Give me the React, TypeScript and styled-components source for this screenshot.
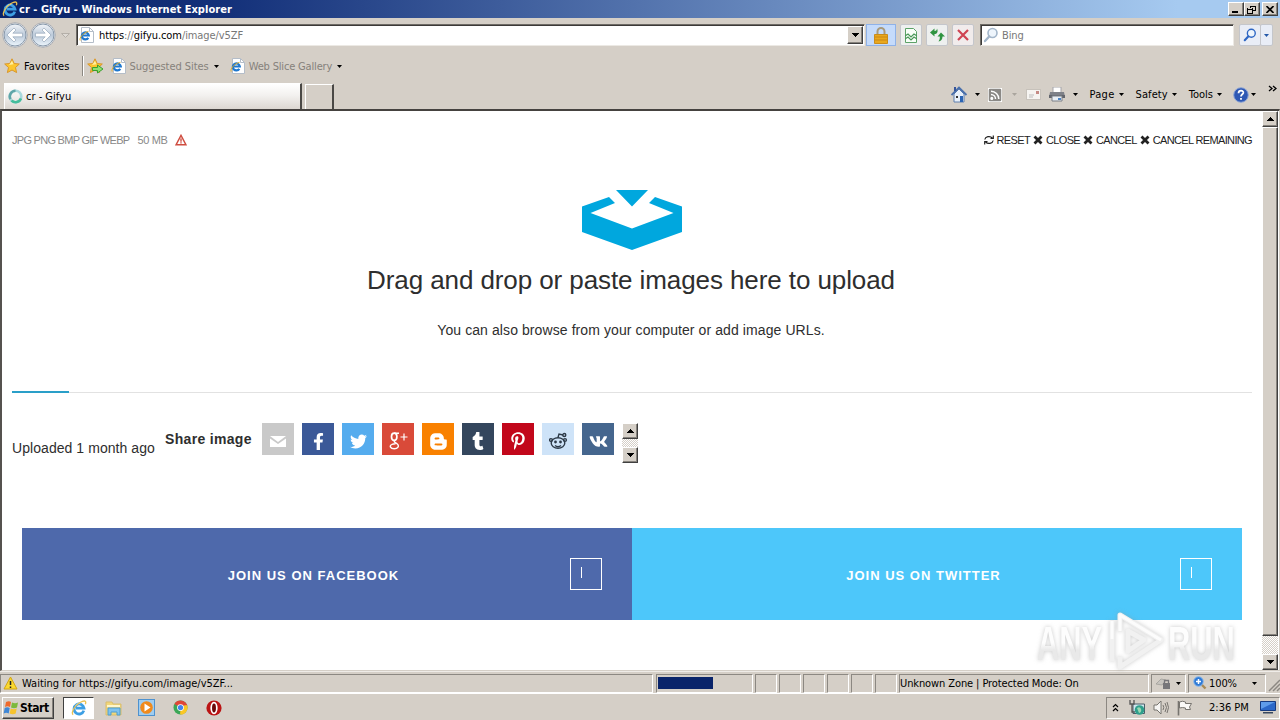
import React from 'react';
import styled, { createGlobalStyle, css } from 'styled-components';
import { FaFacebookF, FaTwitter, FaBloggerB, FaTumblr, FaPinterestP, FaVk } from 'react-icons/fa';

const Global = createGlobalStyle`
  * { box-sizing: border-box; }
  body { margin: 0; overflow: hidden; background: #d5cec6; }
  svg { display: block; flex: none; }
`;

const face = '#d5cfc7';

const raised = css`
  border: 1px solid;
  border-color: #fff #404040 #404040 #fff;
  box-shadow: inset -1px -1px 0 #86827c;
  background: ${face};
`;

const Window = styled.div`
  width: 1280px;
  height: 720px;
  display: flex;
  flex-direction: column;
  background: ${face};
  color: #000;
  font: 11px/14px 'DejaVu Sans Condensed', 'DejaVu Sans', sans-serif;
  font-stretch: condensed;
  white-space: nowrap;
`;

const Text = styled.span<{ $sp?: number; $c?: string; $ml?: number; $mt?: number }>`
  letter-spacing: ${p => p.$sp ?? -0.1}px;
  color: ${p => p.$c ?? '#000'};
  margin-left: ${p => p.$ml ?? 0}px;
  margin-top: ${p => p.$mt ?? 0}px;
  flex: none;
`;

const Space = styled.div<{ $w?: number }>`
  ${p => (p.$w === undefined ? 'flex: 1;' : `flex: none; width: ${p.$w}px;`)}
`;

const TitleBar = styled.header`
  height: 18px;
  flex: none;
  display: flex;
  align-items: center;
  padding: 0 2px 0 2px;
  background: linear-gradient(90deg, #0a246a 0%, #14317a 18%, #a6caf0 92%);
`;

const Title = styled.h1`
  margin: 1px 0 0 1px;
  flex: 1;
  color: #fff;
  font-size: 11px;
  font-weight: bold;
  letter-spacing: 0.03px;
`;

const CaptionButton = styled.button<{ $gap?: number }>`
  ${raised}
  width: 16px;
  height: 14px;
  padding: 0;
  margin-left: ${p => p.$gap ?? 0}px;
  display: flex;
  align-items: center;
  justify-content: center;
`;

const NavBar = styled.div`
  height: 34px;
  flex: none;
  display: flex;
  align-items: center;
  padding-left: 2px;
`;

const Field = styled.div<{ $w: number }>`
  width: ${p => p.$w}px;
  height: 22px;
  flex: none;
  display: flex;
  align-items: center;
  background: #fff;
  border: 1px solid;
  border-color: #6e6b66 #ece9e4 #ece9e4 #6e6b66;
  box-shadow: inset 1px 1px 0 #3c3a38;
  padding-left: 2px;
`;

const DropButton = styled.div`
  ${raised}
  width: 16px;
  height: 18px;
  display: flex;
  align-items: center;
  justify-content: center;
  margin-right: 1px;
`;

const ToolButton = styled.div<{ $w?: number; $ml: number; $active?: boolean; $bg?: string }>`
  width: ${p => p.$w ?? 22}px;
  height: 22px;
  flex: none;
  margin-left: ${p => p.$ml}px;
  display: flex;
  align-items: center;
  justify-content: center;
  border: 1px solid ${p => (p.$active ? '#8fb2e8' : '#c4c6cb')};
  border-radius: ${p => (p.$active ? 0 : 2)}px;
  background: ${p => (p.$active ? '#c5dbfb' : p.$bg ?? '#eef0ef')};
`;

const FavoritesBar = styled.div`
  height: 28px;
  flex: none;
  display: flex;
  align-items: center;
  padding-left: 4px;
`;

const Divider = styled.div`
  width: 2px;
  height: 20px;
  border-left: 1px solid #8b8781;
  border-right: 1px solid #fff;
`;

const TabBar = styled.div`
  height: 29px;
  flex: none;
  display: flex;
  align-items: flex-end;
  padding-left: 4px;
`;

const Tab = styled.div`
  width: 298px;
  height: 26px;
  display: flex;
  align-items: center;
  padding-left: 3px;
  background: linear-gradient(#fff, #f3f1ef 45%, #dcd7d1);
  border-top: 1px solid #fff;
  border-left: 1px solid #fff;
  border-right: 2px solid #4a4845;
`;

const NewTab = styled.div`
  width: 29px;
  height: 25px;
  margin-left: 3px;
  border: 1px solid #fff;
  border-right: 2px solid #4a4845;
  border-bottom: 0;
`;

const CommandBar = styled.div`
  flex: 1;
  height: 29px;
  display: flex;
  align-items: center;
  justify-content: flex-end;
  padding-right: 3px;
`;

const Viewport = styled.div`
  height: 562px;
  flex: none;
  display: flex;
  background: #fff;
  border-top: 2px solid #45423f;
  border-left: 2px solid #55524f;
  border-right: 1px solid ${face};
  border-bottom: 1px solid ${face};
`;

const Page = styled.main`
  width: 1260px;
  flex: none;
  padding: 0 10px;
  color: #2e2e2e;
  font-family: 'Liberation Sans', Arial, sans-serif;
`;

const UploadHeader = styled.div`
  display: flex;
  align-items: center;
  height: 16px;
  margin-top: 21px;
  font-size: 11px;
`;

const Formats = styled.span<{ $sp: number }>`
  color: #888;
  letter-spacing: ${p => p.$sp}px;
  margin-right: 8px;
`;

const Action = styled.a`
  display: flex;
  align-items: center;
  gap: 3px;
  margin-left: 3px;
  letter-spacing: -0.65px;
  color: #222;
`;

const Drop = styled.section`
  display: flex;
  flex-direction: column;
  align-items: center;
  padding-top: 42px;
  height: 243px;
`;

const Heading = styled.h2`
  margin: 14px 2px 0 0;
  font-size: 26px;
  line-height: 32px;
  font-weight: normal;
  letter-spacing: -0.09px;
`;

const Hint = styled.p`
  margin: 26px 2px 0 0;
  font-size: 14px;
  line-height: 16px;
  letter-spacing: 0.09px;
`;

const Rule = styled.div`
  height: 2px;
  display: flex;
  align-items: flex-end;
  background: linear-gradient(#fff 50%, #e2e2e2 50%);
`;

const RuleActive = styled.div`
  width: 57px;
  height: 2px;
  background: #2a9fc8;
`;

const ShareRow = styled.div`
  display: flex;
  align-items: flex-start;
  height: 40px;
  margin-top: 30px;
  font-size: 14px;
  line-height: 16px;
`;

const Uploaded = styled.span`
  width: 153px;
  margin-top: 17px;
  letter-spacing: 0.06px;
`;

const ShareLabel = styled.b`
  width: 97px;
  margin-top: 8px;
  letter-spacing: 0.32px;
`;

const Social = styled.a<{ $bg: string }>`
  width: 32px;
  height: 32px;
  margin-right: 8px;
  padding-top: 4px;
  display: flex;
  align-items: center;
  justify-content: center;
  background: ${p => p.$bg};
  color: #fff;
`;

const track = css`
  background: repeating-conic-gradient(#fff 0 25%, ${face} 0 50%) 0 0 / 2px 2px;
`;

const MiniScroll = styled.div`
  width: 16px;
  height: 40px;
  display: flex;
  flex-direction: column;
  justify-content: space-between;
  ${track}
`;

const ScrollButton = styled.div`
  ${raised}
  width: 16px;
  height: 16px;
  flex: none;
  display: flex;
  align-items: center;
  justify-content: center;
`;

const ScrollBar = styled.div`
  width: 16px;
  display: flex;
  flex-direction: column;
  ${track}
`;

const Thumb = styled.div`
  ${raised}
  height: 509px;
`;

const JoinRow = styled.div`
  display: flex;
  height: 92px;
  margin: 65px 10px 0;
`;

const Join = styled.a<{ $bg: string }>`
  flex: 1;
  display: flex;
  align-items: center;
  padding: 0 30px 0 35px;
  background: ${p => p.$bg};
  color: #fff;
  font-size: 13px;
  font-weight: bold;
`;

const JoinText = styled.span`
  flex: 1;
  text-align: center;
  letter-spacing: 1px;
  margin-top: 3px;
`;

const JoinBox = styled.span`
  width: 32px;
  height: 32px;
  border: 1px solid #fff;
  padding: 8px 0 0 10px;
`;

const Caret = styled.i`
  display: block;
  width: 1px;
  height: 11px;
  background: #fff;
`;

const StatusBar = styled.div`
  height: 22px;
  flex: none;
  display: flex;
  align-items: center;
  border-top: 1px solid #efece8;
  padding-top: 1px;
`;

const Pane = styled.div<{ $w: number; $mr?: number; $pl?: number }>`
  width: ${p => p.$w}px;
  height: 19px;
  flex: none;
  display: flex;
  align-items: center;
  margin-right: ${p => p.$mr ?? 2}px;
  padding-left: ${p => p.$pl ?? 0}px;
  border: 1px solid;
  border-color: #8c8882 #fff #fff #8c8882;
`;

const Progress = styled.div`
  width: 55px;
  height: 12px;
  background: #0a246a;
`;

const TaskBar = styled.footer`
  height: 27px;
  flex: none;
  display: flex;
  align-items: center;
  border-top: 1px solid #fff;
  padding: 1px 2px 0;
`;

const StartButton = styled.div`
  ${raised}
  width: 52px;
  height: 22px;
  display: flex;
  align-items: center;
  font-size: 12px;
  font-weight: bold;
  letter-spacing: -0.4px;
`;

const ActiveTask = styled.div`
  width: 31px;
  height: 22px;
  margin-left: 9px;
  display: flex;
  align-items: center;
  justify-content: center;
  background: #fff;
  border: 1px solid;
  border-color: #404040 #fff #fff #404040;
`;

const Tray = styled.div`
  width: 174px;
  height: 22px;
  margin-right: -2px;
  display: flex;
  align-items: center;
  border: 1px solid;
  border-color: #8c8882 #fff #fff #8c8882;
  padding-left: 5px;
`;

const Watermark = styled.div`
  position: absolute;
  left: 1037px;
  top: 608px;
  width: 200px;
  height: 66px;
  display: flex;
  align-items: center;
  pointer-events: none;
`;

const MarkSlot = styled.div<{ $w: number }>`
  width: ${p => p.$w}px;
  flex: none;
  filter: drop-shadow(0 0 2px rgba(150, 150, 150, 0.5));
`;

const MarkText = styled.span`
  display: inline-block;
  font: 700 49px/60px 'Liberation Sans', Arial, sans-serif;
  color: transparent;
  background: linear-gradient(#fdfdfd 50%, #e9e9e9 62%);
  -webkit-background-clip: text;
  background-clip: text;
  transform: scaleX(0.63);
  transform-origin: 0 50%;
  margin-top: 4px;
`;

const Mark = styled.svg`
  filter: drop-shadow(0 0 2px rgba(150, 150, 150, 0.5));
`;

const Arrow = ({ up, color = '#000', w = 7 }: { up?: boolean; color?: string; w?: number }) => (
  <svg width={w} height={4} viewBox="0 0 7 4" shapeRendering="crispEdges">
    <path d={up ? 'M3 0h1l3 4H0z' : 'M0 0h7L4 4H3z'} fill={color} />
  </svg>
);

const SmallArrow = ({ color = '#000' }: { color?: string }) => (
  <svg width="5" height="3" viewBox="0 0 5 3"><path d="M0 0h5L2.5 3z" fill={color} /></svg>
);

const IELogo = ({ s = 16 }: { s?: number }) => (
  <svg width={s} height={s} viewBox="0 0 16 16" fill="none">
    <path d="M12.8 10.6A5 5 0 1 1 13 8.2H5" stroke="#3d9fe4" strokeWidth="2.8" />
    <path d="M4.4 6.2a4.4 4.4 0 0 1 5-2.6" stroke="#a5dcfa" strokeWidth="1" />
    <path d="M2.2 14.6C-.6 13 4 5.2 9 2.5s6.600-1.500 5.300 1.800" stroke="#e9c052" strokeWidth="1.300" />
  </svg>
);

const IEPage = () => (
  <svg width="15" height="16" viewBox="0 0 15 16" fill="none">
    <path d="M2.500.5h8l4 4v11h-12z" fill="#fff" stroke="#b4bdc8" />
    <path d="M10.500.5v4h4" stroke="#b4bdc8" />
    <path d="M9.300 10.800A3.500 3.500 0 1 1 9.800 8.500H3.500" stroke="#1f78cf" strokeWidth="2.200" />
    <path d="M1.200 13.500C0 11 4 6 9.500 4.300" stroke="#e0ad2a" />
  </svg>
);

const RoundNav = ({ flip }: { flip?: boolean }) => (
  <svg width="26" height="26" viewBox="0 0 26 26" style={flip ? { transform: 'scaleX(-1)' } : undefined}>
    <defs>
      <linearGradient id="nav" x1="0" y1="0" x2="0" y2="1">
        <stop offset="0" stopColor="#f2f5f9" /><stop offset=".5" stopColor="#bccada" /><stop offset="1" stopColor="#ecf5fc" />
      </linearGradient>
    </defs>
    <circle cx="13" cy="13" r="12.300" fill="#f4f5f7" stroke="#a9acb2" />
    <circle cx="13" cy="13" r="11" fill="url(#nav)" stroke="#8697a9" />
    <path d="M5 13l7-7 2 2-3.200 3.200H20.500v3.600h-9.700L14 18l-2 2z" fill="#fff" stroke="#8b9db1" strokeWidth=".6" />
  </svg>
);

const Star = ({ add }: { add?: boolean }) => (
  <svg width="17" height="16" viewBox="0 0 17 16">
    <path d="M8 .8l2.200 4.700 5.100.5-3.800 3.500 1.100 5.100L8 12l-4.600 2.600 1.100-5.100L.7 6l5.100-.5z" fill="#fcc62e" stroke="#d9962a" />
    <path d="M8 2.800l1.500 3.500L5 7z" fill="#fff0a0" />
    {add && <path d="M5.500 9.500h5V7l5.500 4-5.500 4v-2.500h-5z" fill="#8fe070" stroke="#2d9a28" strokeWidth=".9" />}
  </svg>
);

const Cross = () => (
  <svg width="10" height="10" viewBox="0 0 10 10">
    <path d="M1.500 1.500l7 7M8.500 1.500l-7 7" stroke="#222" strokeWidth="2.800" />
  </svg>
);

const Lens = ({ c, s = 16 }: { c: string; s?: number }) => (
  <svg width={s} height={s} viewBox="0 0 16 16" fill="none">
    <circle cx="9.500" cy="6" r="4.500" fill="#eef5fc" stroke={c} strokeWidth="1.600" />
    <path d="M6.200 9.500L2 14" stroke={c} strokeWidth="2.400" strokeLinecap="round" />
  </svg>
);

export default function App() {
  return (
    <Window>
      <Global />
      <TitleBar>
        <IELogo s={16} />
        <Title>cr - Gifyu - Windows Internet Explorer</Title>
        <CaptionButton><svg width="8" height="8"><path d="M0 6h6v2H0z" /></svg></CaptionButton>
        <CaptionButton>
          <svg width="10" height="9" fill="none" stroke="#000" shapeRendering="crispEdges">
            <path d="M3 1h6M3.500 1v2M8.500 1v5M6 5.500h3M0 4h6M.5 3v6M5.500 3v6M0 8.500h6" />
          </svg>
        </CaptionButton>
        <CaptionButton $gap={2}>
          <svg width="8" height="7" stroke="#000" strokeWidth="1.600"><path d="M.5 0l7 7M7.500 0l-7 7" /></svg>
        </CaptionButton>
      </TitleBar>

      <NavBar>
        <RoundNav />
        <Space $w={2} />
        <RoundNav flip />
        <Space $w={5} />
        <svg width="9" height="5"><path d="M.5.5h8l-4 4z" fill="#dedad5" stroke="#b4afa8" /></svg>
        <Space $w={6} />
        <Field $w={789}>
          <IEPage />
          <Text $ml={5} $mt={2} $c="#777" $sp={-0.08}>
            <Text $sp={-0.08}>https</Text>://<Text $sp={-0.08}>gifyu.com</Text>/image/v5ZF
          </Text>
          <Space />
          <DropButton><Arrow /></DropButton>
        </Field>
        <ToolButton $w={30} $ml={1} $active>
          <svg width="14" height="17" viewBox="0 0 14 17">
            <path d="M3.500 8V4.500a3.500 3.500 0 0 1 7 0V8" fill="none" stroke="#a89a7c" strokeWidth="2" />
            <path d="M.5 7.500h13v9H.5z" fill="#e9a81e" stroke="#c98c1c" />
            <path d="M1 10h12M1 13h12" stroke="#c98614" />
          </svg>
        </ToolButton>
        <ToolButton $ml={4}>
          <svg width="12" height="15" fill="none">
            <path d="M.5.500h8l3 3v11H.5z" fill="#f8fff8" stroke="#5ca268" />
            <path d="M0 8l3-2 3 3 3-3 3 2M0 11l3-2 3 3 3-3 3 2" stroke="#4b985a" strokeWidth="1.200" />
          </svg>
        </ToolButton>
        <ToolButton $ml={4}>
          <svg width="15" height="14" viewBox="0 0 15 14" fill="#2f9440">
            <path d="M0 4.500L4.500.5v2.500C6.500 3 7 1.500 7 .5 8.500 4 7 6 4.500 6v2.500z" />
            <path d="M7.500 8.500L11 4.500l4 4h-2.500c0 3-1.500 4.500-4 5C9.500 12 10 10.500 9.800 8.500z" />
          </svg>
        </ToolButton>
        <ToolButton $ml={4} $bg="#f1ecec">
          <svg width="12" height="12" stroke="#cf4453" strokeWidth="2.200"><path d="M1 1l10 10M11 1L1 11" /></svg>
        </ToolButton>
        <Space $w={6} />
        <Field $w={254}>
          <Lens c="#a3b6ca" />
          <Text $ml={3} $mt={2} $c="#777">Bing</Text>
        </Field>
        <ToolButton $ml={5} $bg="#e9edf6"><Lens c="#2d66c4" s={14} /></ToolButton>
        <ToolButton $ml={-1} $w={13} $bg="#e9edf6"><SmallArrow color="#2458a8" /></ToolButton>
      </NavBar>

      <FavoritesBar>
        <Star />
        <Text $ml={3} $mt={1} $sp={0.1}>Favorites</Text>
        <Space $w={12} />
        <Divider />
        <Space $w={3} />
        <Star add />
        <Space $w={7} />
        <IEPage />
        <Text $ml={4} $mt={2} $c="#85817b" $sp={-0.05}>Suggested Sites</Text>
        <Space $w={5} />
        <SmallArrow />
        <Space $w={11} />
        <IEPage />
        <Text $ml={4} $mt={2} $c="#85817b" $sp={-0.17}>Web Slice Gallery</Text>
        <Space $w={5} />
        <SmallArrow />
      </FavoritesBar>

      <TabBar>
        <Tab>
          <svg width="15" height="15" fill="none" strokeWidth="2.600">
            <circle cx="7.500" cy="7.500" r="5.800" stroke="#a9d8dc" />
            <path d="M7.500 1.700a5.800 5.800 0 0 0-5 8.500" stroke="#5fa5a8" />
            <path d="M3.500 11.500a5.800 5.800 0 0 0 9.500-2" stroke="#45bd9c" />
          </svg>
          <Text $ml={3} $sp={0}>cr - Gifyu</Text>
        </Tab>
        <NewTab />
        <CommandBar>
          <svg width="17" height="17" viewBox="0 0 17 17">
            <path d="M3 8v8h10V8L8 3z" fill="#e8f0fa" stroke="#5e7fae" />
            <path d="M.5 9L8 1.500 15.500 9" fill="none" stroke="#4a70ac" strokeWidth="1.800" />
            <path d="M9 10h3v6H9z" fill="#2b64b4" /><path d="M5 10h2v2H5z" fill="#333" /><path d="M3 1h2v4H3z" fill="#36559a" />
          </svg>
          <Space $w={7} /><SmallArrow /><Space $w={8} />
          <svg width="14" height="14" fill="none" stroke="#fff" strokeWidth="1.500">
            <rect width="14" height="14" rx="2" fill="#8b8986" /><circle cx="3.800" cy="10.400" r=".8" />
            <path d="M3 6.500a4.500 4.500 0 0 1 4.500 4.500M3 3.300a7.800 7.800 0 0 1 7.800 7.800" />
          </svg>
          <Space $w={10} /><SmallArrow color="#aaa59e" /><Space $w={9} />
          <svg width="15" height="11"><rect x=".5" y=".5" width="14" height="10" fill="#f6f4f1" stroke="#c7c2bb" /><path d="M10 2h3v3h-3z" fill="#c58a84" /><path d="M3 6h5M3 8h4" stroke="#bbb" /></svg>
          <Space $w={8} />
          <svg width="16" height="15" viewBox="0 0 16 15">
            <path d="M4 0h8v6H4z" fill="#fff" stroke="#a5a5aa" /><path d="M1 5h14l1 5H0z" fill="#7e8188" /><path d="M0 8h16v3H0z" fill="#63666d" /><path d="M3 9h10v5H3z" fill="#e8eef4" stroke="#7c8088" /><path d="M9 11h3v2H9z" fill="#4c84c4" />
          </svg>
          <Space $w={8} /><SmallArrow /><Space $w={11} />
          <Text $sp={0.3}>Page</Text><Space $w={4} /><SmallArrow />
          <Space $w={12} /><Text $sp={0.1}>Safety</Text><Space $w={4} /><SmallArrow />
          <Space $w={12} /><Text $sp={0}>Tools</Text><Space $w={4} /><SmallArrow />
          <Space $w={11} />
          <svg width="16" height="16"><circle cx="8" cy="8" r="7.300" fill="#2e58b4" stroke="#8fa6d6" /><path d="M5.500 6.200c.2-3.600 5.300-3 4.800-.3C10 7.300 8 7.300 8 9.500M8 11v1.800" fill="none" stroke="#fff" strokeWidth="1.800" /></svg>
          <Space $w={2} /><SmallArrow />
          <Space $w={12} />
          <svg width="9" height="20" fill="none" stroke="#000" strokeWidth="1.300"><path d="M1 1l3 2.500L1 6M5 1l3 2.500L5 6" /></svg>
        </CommandBar>
      </TabBar>

      <Viewport>
        <Page>
          <UploadHeader>
            <Formats $sp={-0.72}>JPG PNG BMP GIF WEBP</Formats>
            <Formats $sp={-0.35}>50 MB</Formats>
            <svg width="12" height="12" fill="none" stroke="#cf4d40" strokeWidth="1.400">
              <path d="M6 1.300L11 10.800H1zM6 4.500v3.200M6 8.300v1.300" />
            </svg>
            <Space />
            <Action>
              <svg width="10" height="10" viewBox="0 0 10 10" fill="none" stroke="#222" strokeWidth="1.200">
                <path d="M.8 4.500C1.300 1.500 6 .5 8.300 3M9.200 5.500C8.700 8.500 4 9.500 1.700 7M9.300.5v3H6.500M.7 9.500v-3h2.800" />
              </svg>
              RESET
            </Action>
            <Action><Cross />CLOSE</Action>
            <Action><Cross />CANCEL</Action>
            <Action><Cross />CANCEL REMAINING</Action>
          </UploadHeader>
          <Drop>
            <svg width="100" height="60" viewBox="0 0 100 60" fill="#00a7de">
              <path d="M34 0h32L50 16.500zM27 7l6 6L8.500 23 50 38.500 91.500 23 67 13l6-6 27 9.500v25.500L50 60 0 42V16.500z" />
            </svg>
            <Heading>Drag and drop or paste images here to upload</Heading>
            <Hint>You can also browse from your computer or add image URLs.</Hint>
          </Drop>
          <Rule><RuleActive /></Rule>
          <ShareRow>
            <Uploaded>Uploaded 1 month ago</Uploaded>
            <ShareLabel>Share image</ShareLabel>
            <Social $bg="#c9c9c9"><svg width="16" height="12"><path d="M0 1h16L8 7zM0 3.500L8 9l8-5.500V12H0z" fill="#fff" /></svg></Social>
            <Social $bg="#3b5998"><FaFacebookF size={17} /></Social>
            <Social $bg="#55acee"><FaTwitter size={17} /></Social>
            <Social $bg="#d94a39">
              <svg width="19" height="18" viewBox="0 0 19 18" fill="none" stroke="#fff">
                <ellipse cx="5.200" cy="4.800" rx="2.700" ry="3.600" strokeWidth="1.700" />
                <path d="M5 1.200h5M6 8.500c-2 1.500.5 2 2 3.200 2.800 2.300.8 5-2.800 5-4 0-5-2.800-2.500-4.200 1-.6 2.300-.8 3.800-.8" strokeWidth="1.400" />
                <path d="M15 1.500v7M11.500 5H18.500" strokeWidth="1.200" />
              </svg>
            </Social>
            <Social $bg="#f98100"><FaBloggerB size={19} /></Social>
            <Social $bg="#34465d"><FaTumblr size={18} /></Social>
            <Social $bg="#c2071b"><FaPinterestP size={18} /></Social>
            <Social $bg="#cee3f8">
              <svg width="19" height="18" viewBox="0 0 19 18" fill="none" stroke="#2d3a48" strokeWidth="1.400">
                <ellipse cx="9" cy="11" rx="6.800" ry="5.300" /><path d="M9 5.500l1-3.500 4 1M6 13.500c1.800 1.500 4.200 1.500 6 0" />
                <circle cx="15.300" cy="3" r="1.500" /><circle cx="2" cy="8" r="1.400" /><circle cx="16" cy="8" r="1.400" />
                <circle cx="6.500" cy="10" r=".7" /><circle cx="11.500" cy="10" r=".7" />
              </svg>
            </Social>
            <Social $bg="#45668e"><FaVk size={19} /></Social>
            <MiniScroll>
              <ScrollButton><Arrow up /></ScrollButton>
              <ScrollButton><Arrow /></ScrollButton>
            </MiniScroll>
          </ShareRow>
          <JoinRow>
            <Join $bg="#4e69ab"><JoinText>JOIN US ON FACEBOOK</JoinText><JoinBox><Caret /></JoinBox></Join>
            <Join $bg="#4dc7fa"><JoinText>JOIN US ON TWITTER</JoinText><JoinBox><Caret /></JoinBox></Join>
          </JoinRow>
        </Page>
        <ScrollBar>
          <ScrollButton><Arrow up /></ScrollButton>
          <Thumb />
          <Space />
          <ScrollButton><Arrow /></ScrollButton>
        </ScrollBar>
      </Viewport>

      <StatusBar>
        <Pane $w={653} $mr={3} $pl={2}>
          <svg width="15" height="14"><path d="M7.500 1L14 13H1z" fill="#fbd92e" stroke="#d2a414" /><path d="M7.500 5v4M7.500 10.500V12" stroke="#222" strokeWidth="1.500" /></svg>
          <Text $ml={4} $mt={1} $sp={0}>Waiting for https://gifyu.com/image/v5ZF...</Text>
        </Pane>
        <Pane $w={97} $pl={1}><Progress /></Pane>
        {[0, 1, 2, 3, 4, 5].map(i => <Pane key={i} $w={22} />)}
        <Pane $w={250}><Text $mt={1}>Unknown Zone | Protected Mode: On</Text></Pane>
        <Pane $w={35} $pl={4}>
          <svg width="16" height="14" viewBox="0 0 16 14"><path d="M0 8l5-5 5 1-4 5z" fill="#c7c4bf" stroke="#9b9995" strokeWidth=".7" /><path d="M7 7h7v6H7z" fill="#77767a" /><path d="M8.500 7V4.500h4V7" fill="none" stroke="#77767a" strokeWidth="1.300" /></svg>
          <Space $w={4} /><SmallArrow />
        </Pane>
        <Pane $w={78} $pl={4}>
          <svg width="14" height="14" viewBox="0 0 14 14" fill="none"><path d="M8.500 8.500l4 4" stroke="#a98b57" strokeWidth="2.400" /><circle cx="5.500" cy="5.500" r="4.800" fill="#2f7ad6" stroke="#8db9ea" /><path d="M5.500 3v5M3 5.500h5" stroke="#fff" strokeWidth="1.500" /></svg>
          <Text $ml={2} $mt={1}>100%</Text><Space $w={15} /><SmallArrow />
        </Pane>
        <svg width="13" height="18" stroke="#8c8882" strokeWidth="1.500"><path d="M1 17L12 6M5 17l7-7M9 17l3-3" /></svg>
      </StatusBar>

      <TaskBar>
        <StartButton>
          <svg width="17" height="16" viewBox="0 0 17 16"><path d="M3 2q3-1.500 5 0L7 7Q4.500 5.500 2 7z" fill="#ee6a2c" /><path d="M9 2.500q3 1.500 6 0L14 7.500q-3 1.500-6 0z" fill="#7cb93c" /><path d="M1.700 8q2.500-1.500 5 0l-1 5.500q-2.500-1.500-5 0z" fill="#3f87d6" /><path d="M7.700 8.500q3 1.500 6 0l-1 5q-3 1.500-6 0z" fill="#f6c32d" /></svg>
          Start
        </StartButton>
        <ActiveTask><IELogo s={16} /></ActiveTask>
        <Space $w={11} />
        <svg width="17" height="16" viewBox="0 0 17 16"><path d="M1 2h6l1 2h8v11H1z" fill="#f2d77a" stroke="#d9bd6c" /><path d="M3 8h12v7h-3v-3H6v3H3z" fill="#7fc2ee" stroke="#4f9dd0" /><path d="M2 5h13v2H2z" fill="#fff6cc" /></svg>
        <Space $w={16} />
        <svg width="17" height="17" viewBox="0 0 17 17"><rect x=".5" y=".5" width="16" height="16" fill="#9fcdf0" stroke="#4e92cf" /><circle cx="8.500" cy="8.500" r="6.300" fill="#f08a1c" /><path d="M6.500 4.500v8l6-4z" fill="#fff" /></svg>
        <Space $w={18} />
        <svg width="15" height="15" viewBox="0 0 16 16"><circle cx="8" cy="8" r="7.500" fill="#3ba757" /><path d="M8 8L1.500 4.200A7.500 7.500 0 0 1 14.500 4.300z" fill="#e04637" /><path d="M8 8l6.500-3.800A7.500 7.500 0 0 1 7.500 15.500z" fill="#fbc724" /><path d="M8 4.300h6.700L15 5.500H9z" fill="#e04637" /><circle cx="8" cy="8" r="3.600" fill="#fff" /><circle cx="8" cy="8" r="2.800" fill="#4384ee" /></svg>
        <Space $w={18} />
        <svg width="16" height="16" viewBox="0 0 16 16"><circle cx="8" cy="8" r="7.600" fill="#bb1414" /><ellipse cx="8" cy="8" rx="2.800" ry="5.300" fill="#6b0808" stroke="#fff" strokeWidth="1.700" /></svg>
        <Space />
        <Tray>
          <svg width="7" height="9" fill="none" stroke="#000" strokeWidth="1.200"><path d="M1 4l2.500-2.500L6 4M1 8l2.500-2.500L6 8" /></svg>
          <Space $w={10} />
          <svg width="16" height="16" viewBox="0 0 16 16"><path d="M4 4h11.500v9.500H4z" fill="#cfe7ee" stroke="#4b5d68" /><circle cx="10.500" cy="10" r="4.800" fill="#2f9f8c" /><path d="M8 8q3-2 4 1t-2 4" fill="#9ad8b2" /><path d="M1 0v4h4V0M3 4v8h3" fill="none" stroke="#555" strokeWidth="1.300" /></svg>
          <Space $w={8} />
          <svg width="16" height="15" viewBox="0 0 16 15" fill="none" stroke="#77746f"><path d="M1 5h3l4-4v13l-4-4H1z" fill="#f6f5f3" /><path d="M10 5q1.500 2.500 0 5M12 3q3 4.500 0 9M14 2q3 5.500 0 11" /></svg>
          <Space $w={8} />
          <svg width="16" height="16" viewBox="0 0 16 16" fill="#faf9f7" stroke="#77746f"><path d="M1.500 1v14.500" strokeWidth="1.600" /><path d="M2.500 2q3-1.500 6 0v1.500h6L12.500 7l1 2.500h-5V8q-3-1-6 0z" /></svg>
          <Text $ml={16} $sp={0}>2:36 PM</Text>
          <Space $w={11} />
          <svg width="16" height="13"><path d="M.5.500h15v9H.5z" fill="#2c68c8" stroke="#173b80" /><path d="M1 1h14L1 8z" fill="#5f9cea" /><path d="M3 11h10v1.500H3z" fill="#39485f" /></svg>
        </Tray>
      </TaskBar>

      <Watermark>
        <MarkSlot $w={67}><MarkText>ANY</MarkText></MarkSlot>
        <Mark width="64" height="64" viewBox="0 0 64 64" fill="none" strokeLinejoin="round">
          <path d="M16 22V6L57 31 16 58V48M8 12v40M24 22v20l16-11z" stroke="#f1f1f1" strokeWidth="5" />
          <path d="M16 22V6L57 31M8 12v18" stroke="#fff" strokeWidth="3" strokeOpacity=".8" />
        </Mark>
        <MarkSlot $w={66}><MarkText>RUN</MarkText></MarkSlot>
      </Watermark>
    </Window>
  );
}
